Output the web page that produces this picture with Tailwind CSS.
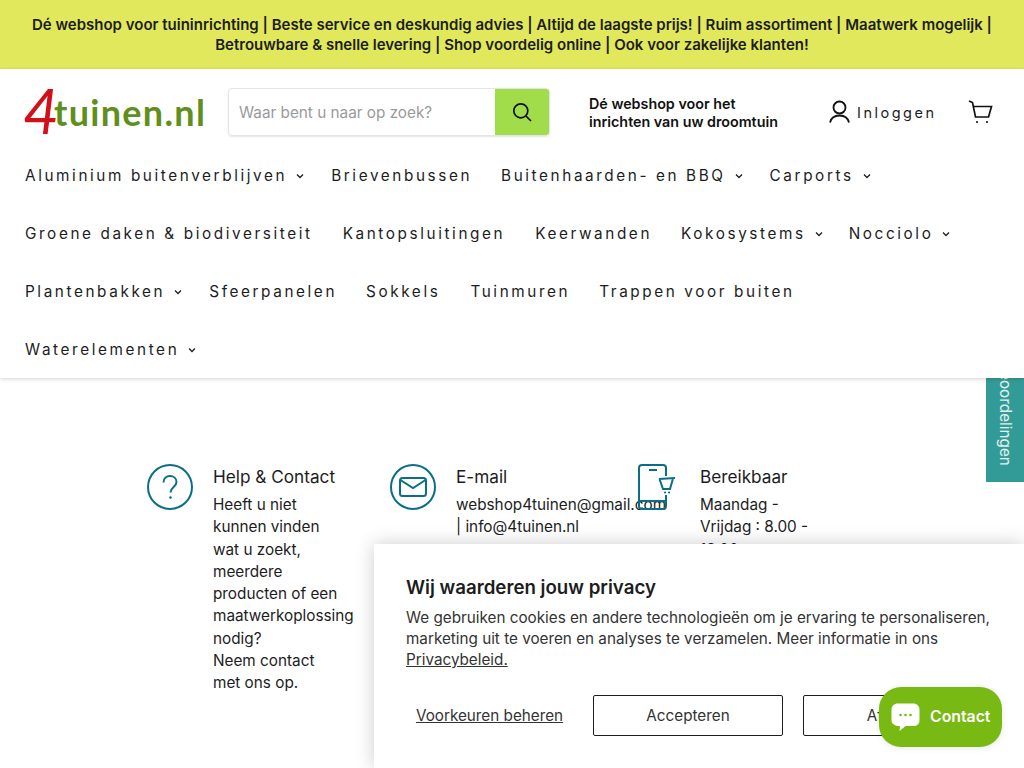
<!DOCTYPE html>
<html lang="nl">
<head>
    <meta charset="UTF-8">
    <meta name="viewport" content="width=device-width, initial-scale=1.0">
    <title>4tuinen.nl</title>
    <script src="https://cdn.jsdelivr.net/npm/@tailwindcss/browser@4"></script>
</head>
<body class="relative h-screen overflow-hidden bg-white font-['Inter',sans-serif] text-[#1c1d1d]">

    <!-- aankondiging -->
    <div class="h-[69px] bg-[#e1e85b] flex items-center justify-center text-center">
        <p class="w-[1000px] text-[15px] leading-[20px] font-semibold">Dé webshop voor tuininrichting | Beste service en deskundig advies | Altijd de laagste prijs! | Ruim assortiment | Maatwerk mogelijk | Betrouwbare &amp; snelle levering | Shop voordelig online | Ook voor zakelijke klanten!</p>
    </div>

    <!-- header -->
    <header class="relative z-20 h-[309px] bg-white shadow-[0_1px_4px_rgba(0,0,0,0.18)]">
        <div class="h-[77px] pt-[9px] pl-[25px] flex items-center">
            <a href="#" class="w-[203px] h-[48px] flex items-end shrink-0 -ml-[2px] mr-[2px]">
                <span class="text-[#d2101a] text-[62px] leading-[52px] font-['Lato',sans-serif] italic">4</span>
                <span class="text-[#5f8f1c] text-[36px] leading-[40px] mb-[4px] font-['Lato',sans-serif] font-bold -ml-[5px] tracking-[1.300px]">tuinen.nl</span>
            </a>
            <div class="w-[322px] h-[48px] flex rounded-[4px] border border-[#e4e4e4] shadow-[0_1px_2px_rgba(0,0,0,0.1)] overflow-hidden">
                <div class="flex-1 pl-[10px] pt-[2px] flex items-center text-[15.300px] text-[#9a9a9a]">Waar bent u naar op zoek?</div>
                <div class="w-[54px] bg-[#a1dc4b] flex items-center justify-center">
                    <svg class="w-[20px] h-[20px]" viewBox="0 0 20 20" fill="none" stroke="#111" stroke-width="1.7"><circle cx="8.8" cy="8.8" r="7"/><path d="M13.8 13.8 19 19"/></svg>
                </div>
            </div>
            <p class="ml-[39px] w-[210px] pt-[1px] text-[14.300px] leading-[18px] font-semibold text-[#111]">Dé webshop voor het<br>inrichten van uw droomtuin</p>
            <div class="ml-[30px] flex items-center">
                <svg class="w-[21px] h-[24px]" viewBox="0 0 21 24" fill="none" stroke="#111" stroke-width="1.8"><circle cx="10.5" cy="7.5" r="6"/><path d="M1 22.5c1.2-4.6 4.6-7 9.5-7s8.300 2.400 9.500 7"/></svg>
                <span class="ml-[7px] pt-[2px] text-[14.5px] tracking-[2.500px] text-[#1c1d1d]">Inloggen</span>
            </div>
            <svg class="ml-[32px] w-[25px] h-[24px]" viewBox="0 0 25 24" fill="none" stroke="#111" stroke-width="1.700"><path d="M1 1l3.500 1.500 3 14.500h13l3-10.500H5"/><circle cx="9" cy="22" r="1.100" fill="#111" stroke="none"/><circle cx="19" cy="22" r="1.100" fill="#111" stroke="none"/></svg>
        </div>

        <!-- navigatie -->
        <nav class="pl-[25px] pt-[1px] text-[15.300px] tracking-[2.600px] text-[#1c1d1d]">
            <div class="h-[58px] flex items-center">
                <a class="flex items-center mr-[27px]">Aluminium buitenverblijven
                    <svg class="ml-[9px] w-[8px] h-[6px]" viewBox="0 0 8 6" fill="none" stroke="#1c1d1d" stroke-width="1.300"><path d="m1 1.500 3 3 3-3"/></svg></a>
                <a class="mr-[29px]">Brievenbussen</a>
                <a class="flex items-center mr-[27px]">Buitenhaarden- en BBQ
                    <svg class="ml-[9px] w-[8px] h-[6px]" viewBox="0 0 8 6" fill="none" stroke="#1c1d1d" stroke-width="1.300"><path d="m1 1.500 3 3 3-3"/></svg></a>
                <a class="flex items-center">Carports
                    <svg class="ml-[9px] w-[8px] h-[6px]" viewBox="0 0 8 6" fill="none" stroke="#1c1d1d" stroke-width="1.300"><path d="m1 1.500 3 3 3-3"/></svg></a>
            </div>
            <div class="h-[58px] flex items-center">
                <a class="mr-[30px]">Groene daken &amp; biodiversiteit</a>
                <a class="mr-[30px]">Kantopsluitingen</a>
                <a class="mr-[29px]">Keerwanden</a>
                <a class="flex items-center mr-[26px]">Kokosystems
                    <svg class="ml-[9px] w-[8px] h-[6px]" viewBox="0 0 8 6" fill="none" stroke="#1c1d1d" stroke-width="1.300"><path d="m1 1.500 3 3 3-3"/></svg></a>
                <a class="flex items-center">Nocciolo
                    <svg class="ml-[9px] w-[8px] h-[6px]" viewBox="0 0 8 6" fill="none" stroke="#1c1d1d" stroke-width="1.300"><path d="m1 1.500 3 3 3-3"/></svg></a>
            </div>
            <div class="h-[58px] flex items-center">
                <a class="flex items-center mr-[27px]">Plantenbakken
                    <svg class="ml-[9px] w-[8px] h-[6px]" viewBox="0 0 8 6" fill="none" stroke="#1c1d1d" stroke-width="1.300"><path d="m1 1.500 3 3 3-3"/></svg></a>
                <a class="mr-[29px]">Sfeerpanelen</a>
                <a class="mr-[30px]">Sokkels</a>
                <a class="mr-[29px]">Tuinmuren</a>
                <a>Trappen voor buiten</a>
            </div>
            <div class="h-[58px] flex items-center">
                <a class="flex items-center">Waterelementen
                    <svg class="ml-[9px] w-[8px] h-[6px]" viewBox="0 0 8 6" fill="none" stroke="#1c1d1d" stroke-width="1.300"><path d="m1 1.500 3 3 3-3"/></svg></a>
            </div>
        </nav>
    </header>

    <!-- contact blokken -->
    <main class="pt-[86px] pl-[147px] flex text-[15.300px] leading-[22.300px] text-[#1c1d1d]">
        <section class="w-[243px] flex shrink-0">
            <svg class="w-[46px] h-[46px] shrink-0" viewBox="0 0 46 46" fill="none" stroke="#0a6f86" stroke-width="2"><circle cx="23" cy="23" r="22"/><path d="M16.500 18.500c0-4 2.800-6.500 6.500-6.500s6.500 2.500 6.500 6c0 5-6 5-6 10.500"/><circle cx="23.500" cy="33.500" r="1.300" fill="#0a6f86" stroke="none"/></svg>
            <div class="ml-[20px] w-[143px]">
                <h3 class="text-[17.200px] leading-[26px] mb-[4px]">Help &amp; Contact</h3>
                <p>Heeft u niet<br>kunnen vinden<br>wat u zoekt,<br>meerdere producten of een maatwerkoplossing nodig?<br>Neem contact<br>met ons op.</p>
            </div>
        </section>
        <section class="w-[243px] flex shrink-0">
            <svg class="w-[46px] h-[46px] shrink-0" viewBox="0 0 46 46" fill="none" stroke="#0a6f86" stroke-width="2"><circle cx="23" cy="23" r="22"/><rect x="10" y="14" width="26" height="18" rx="2.500"/><path d="m10.500 16 12.500 8 12.500-8"/></svg>
            <div class="ml-[20px] w-[143px]">
                <h3 class="text-[17.200px] leading-[26px] mb-[4px]">E-mail</h3>
                <p class="whitespace-nowrap">webshop4tuinen@gmail.com<br>| info@4tuinen.nl</p>
            </div>
        </section>
        <section class="flex shrink-0 relative">
            <div class="w-[67px] shrink-0 pl-[4px]">
                <svg class="w-[38px] h-[46px]" viewBox="0 0 38 46" fill="none" stroke="#0a6f86" stroke-width="2"><path d="M29 12V4a3 3 0 0 0-3-3H5a3 3 0 0 0-3 3v38a3 3 0 0 0 3 3h21a3 3 0 0 0 3-3V31"/><path d="M12 6h8M2 37h27"/><path d="M22 15l16-1M22.500 15l3.500 10h7l3-10.500"/><circle cx="28" cy="28.500" r="1.100" fill="#0a6f86" stroke="none"/><circle cx="32" cy="28.500" r="1.100" fill="#0a6f86" stroke="none"/></svg>
            </div>
            <div class="w-[120px]">
                <h3 class="text-[17.200px] leading-[26px] mb-[4px]">Bereikbaar</h3>
                <p>Maandag - Vrijdag : 8.00 - 18.00</p>
            </div>
        </section>
    </main>

    <!-- beoordelingen tab -->
    <div class="absolute z-10 right-0 top-[378px] w-[38px] h-[104px] bg-[#339b97] overflow-hidden flex items-end justify-center pb-[16px]">
        <span class="text-white/85 text-[15.300px] leading-[19px] whitespace-nowrap [writing-mode:vertical-rl]">Beoordelingen</span>
    </div>

    <!-- cookie banner -->
    <div class="absolute z-30 left-[374px] top-[544px] w-[650px] h-[224px] bg-white shadow-[0_0_18px_rgba(0,0,0,0.2)] pt-[32px] pl-[32px] pr-[30px]">
        <h2 class="text-[18.700px] leading-[23px] font-semibold text-[#1c1d1d]">Wij waarderen jouw privacy</h2>
        <p class="mt-[8px] text-[15.250px] leading-[21px] text-[#333]">We gebruiken cookies en andere technologieën om je ervaring te personaliseren, marketing uit te voeren en analyses te verzamelen. Meer informatie in ons <a class="underline">Privacybeleid.</a></p>
        <div class="mt-[25px] flex items-center">
            <a class="w-[167px] h-[41px] pt-[1px] flex items-center justify-center text-[15.250px] text-[#333] underline">Voorkeuren beheren</a>
            <button class="ml-[20px] w-[190px] h-[41px] pt-[1px] border border-[#1c1d1d] rounded-[2px] text-[15.250px] text-[#333]">Accepteren</button>
            <button class="ml-[20px] w-[190px] h-[41px] pt-[1px] border border-[#1c1d1d] rounded-[2px] text-[15.250px] text-[#333]">Afwijzen</button>
        </div>
    </div>

    <!-- chat knop -->
    <div class="absolute z-40 left-[879px] top-[687px] w-[123px] h-[60px] rounded-[22px] bg-[#78b913] shadow-[0_1px_6px_rgba(0,0,0,0.1)] flex items-center pl-[12px]">
        <svg class="w-[29px] h-[29px] shrink-0" viewBox="0 0 29 29"><path d="M7 0.500h15c4 0 6.500 2.500 6.500 6.500v10c0 4-2.500 6-6.500 6h-7.500l-6 5 .5-5C4 23 .5 21 .5 17V7C.5 3 3 .5 7 .5z" fill="#fff"/><circle cx="9.500" cy="12" r="1.300" fill="#78b913"/><circle cx="14.500" cy="12" r="1.300" fill="#78b913"/><circle cx="19.500" cy="12" r="1.300" fill="#78b913"/></svg>
        <span class="ml-[10px] text-white text-[15.800px] font-semibold">Contact</span>
    </div>

</body>
</html>
